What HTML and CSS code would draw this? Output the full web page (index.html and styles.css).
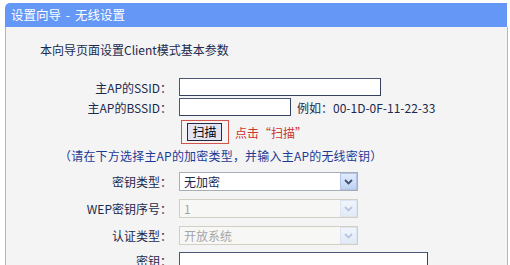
FILE: index.html
```html
<!DOCTYPE html>
<html lang="zh-CN">
<head>
<meta charset="utf-8">
<link rel="stylesheet" href="styles.css">
</head>
<body>
<div class="panel">
  <div class="header">设置向导 - 无线设置</div>
  <div class="content">
    <div class="intro">本向导页面设置Client模式基本参数</div>
    <div class="row row-input">
      <span class="label">主AP的SSID：</span>
      <span class="input input-ssid"></span>
    </div>
    <div class="row row-input">
      <span class="label">主AP的BSSID：</span>
      <span class="input input-bssid"></span>
      <span class="example">例如：00-1D-0F-11-22-33</span>
    </div>
    <div class="row row-scan">
      <span class="label"></span>
      <span class="scan-box"><span class="scan-btn">扫描</span></span>
      <span class="scan-tip">点击“扫描”</span>
    </div>
    <div class="hint">（请在下方选择主AP的加密类型，并输入主AP的无线密钥）</div>
    <div class="row row-select">
      <span class="label">密钥类型：</span>
      <span class="select"><span class="value">无加密</span><span class="arrow"><svg width="9" height="6" viewBox="0 0 9 6"><path d="M1 1 L4.5 4.5 L8 1" fill="none" stroke="#3e4f72" stroke-width="1.8"/></svg></span></span>
    </div>
    <div class="row row-select">
      <span class="label">WEP密钥序号：</span>
      <span class="select disabled"><span class="value">1</span><span class="arrow"><svg width="9" height="6" viewBox="0 0 9 6"><path d="M1 1 L4.5 4.5 L8 1" fill="none" stroke="#b9c6dc" stroke-width="1.8"/></svg></span></span>
    </div>
    <div class="row row-select">
      <span class="label">认证类型：</span>
      <span class="select disabled"><span class="value">开放系统</span><span class="arrow"><svg width="9" height="6" viewBox="0 0 9 6"><path d="M1 1 L4.5 4.5 L8 1" fill="none" stroke="#b9c6dc" stroke-width="1.8"/></svg></span></span>
    </div>
    <div class="row row-key">
      <span class="label">密钥：</span>
      <span class="input input-key"></span>
    </div>
  </div>
</div>
</body>
</html>
```
FILE: styles.css
```css
html, body {
  margin: 0;
  background: #ffffff;
}
body {
  padding: 3px 2px 0 5px;
  font-family: "Noto Sans CJK SC", sans-serif;
  font-size: 12px;
  color: #1b2a4e;
  overflow: hidden;
  height: 262px;
}
.panel {
  height: 300px;
}
.header {
  height: 24px;
  line-height: 24px;
  margin-right: 1px;
  background: #6598f6;
  color: #ffffff;
  padding-left: 6px;
  font-size: 12.5px;
  word-spacing: 2px;
  border-top-left-radius: 5px;
}
.content {
  background: #f4f4f4;
  border-left: 1px solid #dcb07a;
  border-right: 1px solid #dcb07a;
  height: 280px;
  padding-top: 15px;
}
.intro {
  padding-left: 34px;
  line-height: 16px;
  height: 16px;
}
.row {
  display: flex;
  align-items: center;
}
.label {
  width: 166px;
  text-align: right;
  flex: none;
  margin-right: 7px;
}
.row-input {
  height: 20px;
}
.intro + .row {
  margin-top: 19px;
}
.input {
  display: block;
  box-sizing: border-box;
  height: 18px;
  background: #ffffff;
  border: 1px solid #34425f;
  border-top-color: #4a5674;
  border-left-color: #4a5674;
}
.input-ssid { width: 202px; }
.input-bssid { width: 112px; }
.input-key { width: 249px; }
.example {
  margin-left: 6px;
  color: #1b2a4e;
}
.row-scan {
  margin-top: 3px;
  height: 24px;
}
.scan-box {
  margin-left: 2px;
  box-sizing: border-box;
  height: 24px;
  border: 1px solid #d2524c;
  padding: 2px 6px 2px 5px;
}
.scan-btn {
  display: block;
  box-sizing: border-box;
  width: 35px;
  height: 18px;
  line-height: 16px;
  text-align: center;
  color: #000000;
  background: #e3e5f7;
  border: 1px solid #2a2a3a;
}
.scan-tip {
  margin-left: 6px;
  color: #cc3333;
}
.hint {
  margin-top: 4px;
  padding-left: 53px;
  line-height: 16px;
  height: 16px;
  color: #1c3a94;
  letter-spacing: 0.2px;
}
.row-select {
  height: 19px;
  margin-top: 8px;
}
.select {
  display: flex;
  box-sizing: border-box;
  width: 179px;
  height: 19px;
  border: 1px solid #a8aeb6;
  background: #ffffff;
}
.select .value {
  flex: 1;
  line-height: 17px;
  padding-left: 4px;
  color: #1b2a4e;
}
.select .arrow {
  box-sizing: border-box;
  width: 17px;
  height: 17px;
  display: flex;
  align-items: center;
  justify-content: center;
  background: linear-gradient(#e2ebfc, #bfd2f3);
  border: 1px solid #b1c4e8;
}
.select.disabled {
  border-color: #d3d0c2;
  background: #f7f7f5;
}
.select.disabled .value {
  color: #a6a6a6;
}
.select.disabled .arrow {
  background: linear-gradient(#f1f5fc, #e2eaf7);
  border-color: #dce4f1;
}
.row-key {
  height: 20px;
  margin-top: 7px;
  align-items: flex-start;
}
```
